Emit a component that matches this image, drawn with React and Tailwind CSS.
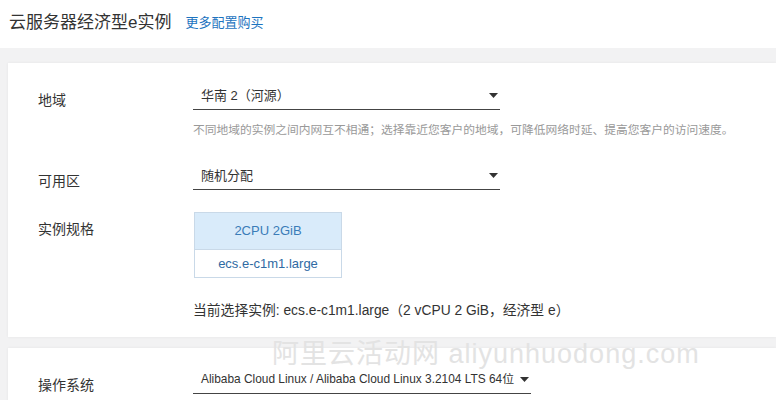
import React from "react";

const font = { fontFamily: '"Liberation Sans", "Noto Sans CJK SC", sans-serif' };

function Arrow() {
  return (
    <svg width="9" height="5" viewBox="0 0 9 5" className="shrink-0">
      <path d="M0 0 L9 0 L4.5 5 Z" fill="#333" />
    </svg>
  );
}

function Select({ text, width, size = "text-[13px]" }) {
  return (
    <div
      className={`flex h-[28px] items-center justify-between whitespace-nowrap border-b border-[#444] pl-[8px] pr-[2px] text-[#333] ${size}`}
      style={{ width }}
    >
      <span>{text}</span>
      <Arrow />
    </div>
  );
}

export default function App() {
  return (
    <div className="relative h-[400px] w-[776px] overflow-hidden bg-[#f2f2f3]" style={font}>
      <div className="flex h-[48px] items-center gap-[14px] bg-white pl-[9px] pb-[8px] pt-[6px]">
        <span className="text-[17px] text-[#333]">云服务器经济型e实例</span>
        <span className="text-[13px] text-[#1d74c0]">更多配置购买</span>
      </div>

      <div className="ml-[8px] mt-[15px] h-[274px] bg-white pl-[30px] pt-[19px] shadow-[0_0_3px_rgba(0,0,0,0.06)]">
        <div className="flex">
          <div className="w-[155px] pt-[8px] text-[14px] leading-[20px] text-[#333]">地域</div>
          <div>
            <Select text="华南 2（河源）" width={307} />
            <div className="mt-[12px] whitespace-nowrap text-[11.75px] leading-[16px] text-[#999]">
              不同地域的实例之间内网互不相通；选择靠近您客户的地域，可降低网络时延、提高您客户的访问速度。
            </div>
          </div>
        </div>

        <div className="mt-[24px] flex">
          <div className="w-[155px] pt-[9px] text-[14px] leading-[20px] text-[#333]">可用区</div>
          <Select text="随机分配" width={307} />
        </div>

        <div className="mt-[21px] flex">
          <div className="w-[156px] pt-[7px] text-[14px] leading-[20px] text-[#333]">实例规格</div>
          <div>
            <div className="w-[148px] border border-[#c9d9e8]">
              <div className="flex h-[36px] items-center justify-center bg-[#d9ebfa] text-[13px] text-[#3a7cb8]">
                2CPU 2GiB
              </div>
              <div className="flex h-[28px] items-center justify-center border-t border-[#c9d9e8] bg-white text-[13px] text-[#2f6aa3]">
                ecs.e-c1m1.large
              </div>
            </div>
            <div className="-ml-[1px] mt-[23px] whitespace-nowrap text-[13.8px] leading-[20px] text-[#333]">
              当前选择实例: ecs.e-c1m1.large（2 vCPU 2 GiB，经济型 e）
            </div>
          </div>
        </div>
      </div>

      <div className="ml-[8px] mt-[11px] h-[60px] bg-white pl-[30px] pt-[18px] shadow-[0_0_3px_rgba(0,0,0,0.06)]">
        <div className="flex">
          <div className="w-[155px] pt-[9px] text-[14px] leading-[20px] text-[#333]">操作系统</div>
          <Select text="Alibaba Cloud Linux / Alibaba Cloud Linux 3.2104 LTS 64位" width={338} size="text-[11.9px]" />
        </div>
      </div>

      <div className="pointer-events-none absolute left-[272px] top-[336px] whitespace-nowrap text-[27px] leading-[36px] tracking-[1px] text-[#e3e3e3]">
        阿里云活动网 aliyunhuodong.com
      </div>
    </div>
  );
}
